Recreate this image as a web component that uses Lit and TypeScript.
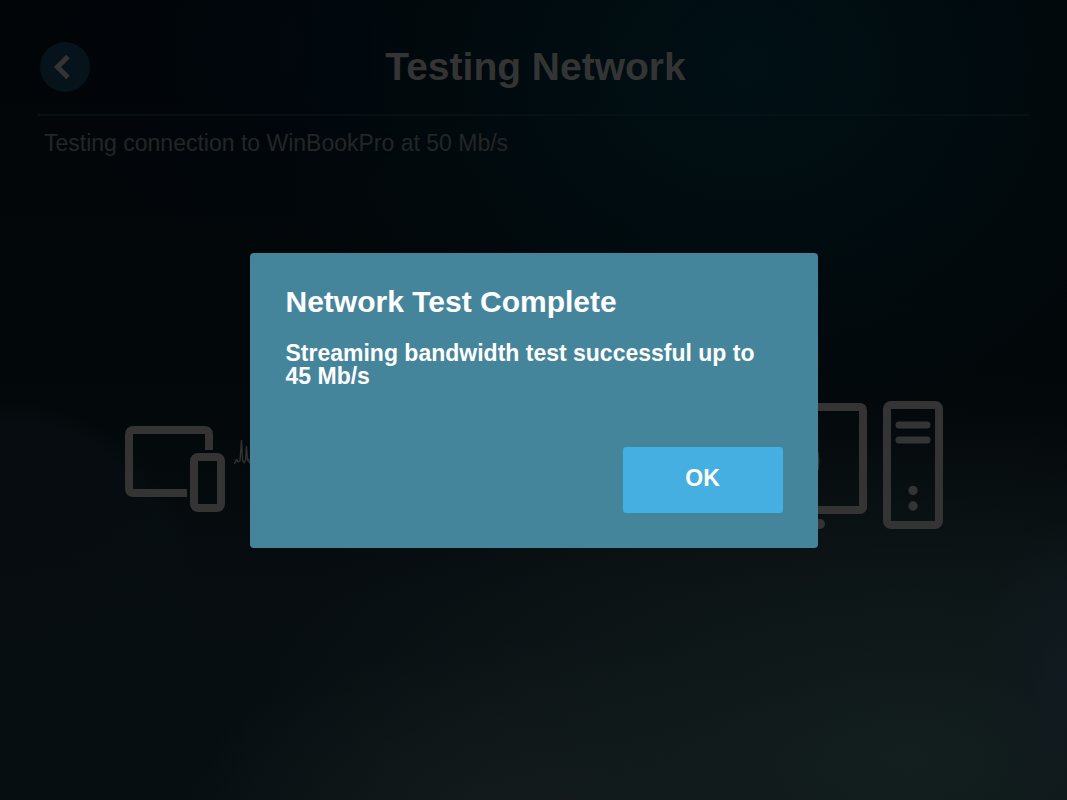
import { LitElement, html, css } from "lit";
import { customElement, property } from "lit/decorators.js";

@customElement("network-scene")
class NetworkScene extends LitElement {
  static styles = css`
    :host {
      display: flex;
      align-items: center;
      flex: 1;
      padding: 0 124px 26px 125px;
      color: #343434;
    }
    svg {
      display: block;
      flex: none;
    }
    .wave {
      flex: 1;
      min-width: 0;
      margin-left: 9px;
    }
  `;

  render() {
    return html`
      <svg width="100" height="128" viewBox="0 0 100 128" fill="none" stroke="currentColor" stroke-width="8" aria-hidden="true">
        <path d="M84 49V34Q84 29 79 29H9Q4 29 4 34V87Q4 92 9 92H62" />
        <rect x="69" y="56" width="27" height="51" rx="4" />
      </svg>
      <svg class="wave" height="128" viewBox="0 0 456 128" preserveAspectRatio="xMinYMid slice" fill="none" stroke="currentColor" stroke-width="1.300" stroke-linejoin="bevel" aria-hidden="true">
        <path d="M0 63L1.500 61L2.500 58L4 61L6 60L7.500 39L8.500 59L10 62L11.500 59L12.500 45L13.500 60L14.500 58L15.500 62L17 60L19 61H456" />
      </svg>
      <svg width="253" height="128" viewBox="0 0 253 128" fill="none" stroke="currentColor" stroke-width="8" aria-hidden="true">
        <rect x="4" y="6" width="169" height="103" rx="3" />
        <circle cx="88" cy="60" r="39.500" stroke-width="4" />
        <path d="M50 123H130" stroke-width="10" stroke-linecap="round" />
        <rect x="197" y="4" width="52" height="120" rx="4" />
        <path d="M209 24H237M209 39H237" stroke-width="7" stroke-linecap="round" />
        <g fill="currentColor" stroke="none">
          <circle cx="223" cy="89.500" r="4.700" />
          <circle cx="223" cy="105" r="4.700" />
        </g>
      </svg>
    `;
  }
}

@customElement("result-dialog")
class ResultDialog extends LitElement {
  @property() heading = "";
  @property() message = "";

  static styles = css`
    :host {
      display: block;
      width: 568px;
      max-width: 90%;
    }
    .panel {
      box-sizing: border-box;
      display: flex;
      flex-direction: column;
      padding: 32px 35px 35px 36px;
      background: #45859c;
      border-radius: 4px;
      color: #fff;
    }
    .heading {
      margin: 0;
      font-size: 30px;
      line-height: 34px;
    }
    .message {
      margin: 23px 0 59px;
      font-size: 23px;
      line-height: 23px;
      font-weight: 700;
    }
    .ok {
      align-self: flex-end;
      width: 160px;
      height: 66px;
      padding: 0 0 2px;
      border: 0;
      border-radius: 3px;
      background: #44afe0;
      color: #fff;
      font: 700 23px "Liberation Sans", Arial, sans-serif;
    }
  `;

  render() {
    return html`
      <section class="panel" role="dialog" aria-modal="true" aria-labelledby="heading">
        <h2 class="heading" id="heading">${this.heading}</h2>
        <p class="message">${this.message}</p>
        <button class="ok" type="button">OK</button>
      </section>
    `;
  }
}

@customElement("app-root")
class AppRoot extends LitElement {
  static styles = css`
    :host {
      display: grid;
      min-height: 100vh;
      font-family: "Liberation Sans", Arial, sans-serif;
      background:
        radial-gradient(ellipse 45% 50% at 70% 8%, #001015, #00101500),
        radial-gradient(ellipse 20% 30% at 25% 6%, #00060c, #00060c00),
        radial-gradient(ellipse 8% 20% at 100% 85%, #101a20, #101a2000),
        radial-gradient(ellipse 65% 45% at 85% 95%, #131e1e, #131e1e00),
        radial-gradient(ellipse 35% 25% at 50% 105%, #151a1b, #151a1b00),
        radial-gradient(circle at 0 75%, #060c1000, #080f1280 180px, #080f1200 200px),
        linear-gradient(#010508, #020709 45%, #070d10 75%, #060e11);
    }
    .page,
    .overlay {
      grid-area: 1 / 1;
      min-width: 0;
    }
    .page {
      display: flex;
      flex-direction: column;
    }
    .bar {
      display: grid;
      grid-template-columns: 50px 1fr 48px;
      align-items: center;
      height: 94px;
      margin: 0 38px;
      padding: 20px 0 0 2px;
      border-bottom: 2px solid #071114;
    }
    .back {
      display: grid;
      place-items: center;
      width: 50px;
      height: 50px;
      padding: 0;
      border: 0;
      border-radius: 50%;
      background: #06131a;
      color: #343434;
    }
    .title {
      margin: 0;
      text-align: center;
      font-size: 39px;
      line-height: 44px;
      color: #343434;
    }
    .status {
      margin: 14px 44px 0;
      font-size: 23px;
      line-height: 26px;
      color: #232627;
    }
    .overlay {
      display: grid;
      place-items: center;
      z-index: 1;
    }
  `;

  render() {
    return html`
      <main class="page">
        <header class="bar">
          <button class="back" type="button" aria-label="Back">
            <svg width="50" height="50" viewBox="0 0 50 50" fill="none" stroke="currentColor" stroke-width="5" aria-hidden="true">
              <path d="M28 14.500L17.500 25L28 35.500" />
            </svg>
          </button>
          <h1 class="title">Testing Network</h1>
        </header>
        <p class="status">Testing connection to WinBookPro at 50 Mb/s</p>
        <network-scene></network-scene>
      </main>
      <div class="overlay">
        <result-dialog
          heading="Network Test Complete"
          message="Streaming bandwidth test successful up to 45 Mb/s"
        ></result-dialog>
      </div>
    `;
  }
}
